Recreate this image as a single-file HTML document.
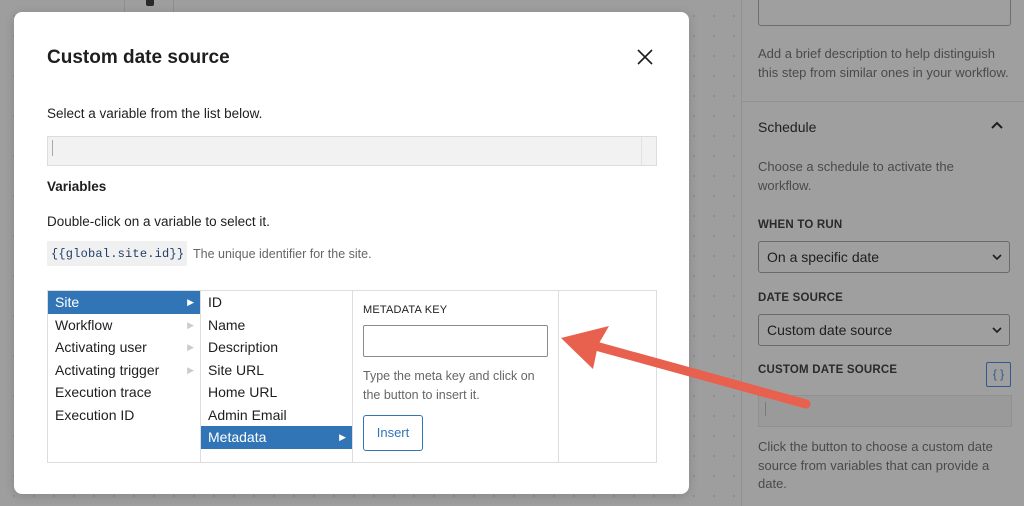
<!DOCTYPE html>
<html><head><meta charset="utf-8"><style>
*{box-sizing:border-box;margin:0;padding:0}
body{width:1024px;height:506px;overflow:hidden;position:relative;font-family:"Liberation Sans",sans-serif;background-color:#9e9e9e;background-image:radial-gradient(#8a8a8a 0.8px,transparent 1px);background-size:20px 20px;background-position:4px 6px}
.abs{position:absolute}
.side{left:741px;top:0;width:283px;height:506px;background:#9f9f9f;border-left:1px solid #929292;color:#3a3a3a}
.modal{left:14px;top:12px;width:675px;height:482px;background:#fff;border-radius:8px;box-shadow:0 2px 10px rgba(0,0,0,.15)}
.t{position:absolute;white-space:nowrap}
.lab{font-size:11.5px;font-weight:bold;color:#2a2a2a;letter-spacing:.2px}
.sel{position:absolute;left:16px;width:252px;height:32px;border:1px solid #6a6a6a;border-radius:3px;font-size:14px;padding:7px 8px;color:#1e1e1e}
.list div{height:22.5px;line-height:22.5px;font-size:14px;padding-left:7px;color:#1e1e1e;position:relative}
.hl{background:#3175b7;color:#fff!important}
.ar{position:absolute;right:6px;top:0;font-size:9px;color:#ccc}
.hl .ar{color:#fff}
</style></head><body>
<div class="abs" style="left:124px;top:0;width:50px;height:14px;border-left:1px solid #8e8e8e;border-right:1px solid #8e8e8e"></div>
<div class="abs" style="left:146px;top:0;width:8px;height:6px;background:#2a2a2a;border-radius:0 0 2px 2px"></div>
<div class="abs side">
 <div class="abs" style="left:16px;top:-4px;width:253px;height:30px;border:1px solid #6e6e6e;border-radius:3px"></div>
 <div class="t" style="left:16px;top:45px;font-size:13px;line-height:18.5px;color:#4a4a4a">Add a brief description to help distinguish<br>this step from similar ones in your workflow.</div>
 <div class="abs" style="left:0;top:101px;width:283px;border-top:1px solid #929292"></div>
 <div class="t" style="left:16px;top:119px;font-size:14px;font-weight:500;color:#1e1e1e">Schedule</div>
 <svg class="abs" style="left:249px;top:121px" width="12" height="8"><path d="M1 7L6 2L11 7" stroke="#1e1e1e" stroke-width="2" fill="none"/></svg>
 <div class="t" style="left:16px;top:157px;font-size:13px;line-height:19px;color:#4a4a4a">Choose a schedule to activate the<br>workflow.</div>
 <div class="t lab" style="left:16px;top:219px">WHEN TO RUN</div>
 <div class="sel" style="top:241px">On a specific date</div>
 <div class="t lab" style="left:16px;top:292px">DATE SOURCE</div>
 <div class="sel" style="top:314px">Custom date source</div>
 <svg class="abs" style="left:250px;top:254px" width="10" height="6"><path d="M1 1L5 5L9 1" stroke="#1e1e1e" stroke-width="1.6" fill="none"/></svg>
 <svg class="abs" style="left:250px;top:327px" width="10" height="6"><path d="M1 1L5 5L9 1" stroke="#1e1e1e" stroke-width="1.6" fill="none"/></svg>
 <div class="t lab" style="left:16px;top:364px">CUSTOM DATE SOURCE</div>
 <div class="abs" style="left:244px;top:362px;width:25px;height:25px;border:1px solid #2e5a8e;border-radius:2px;color:#2e5a8e;font-size:12px;text-align:center;line-height:22px">{ }</div>
 <div class="abs" style="left:16px;top:395px;width:254px;height:32px;border:1px solid #909090;background:#9a9a9a"></div>
 <div class="abs" style="left:23px;top:402px;width:1px;height:14px;background:#7a7a7a"></div>
 <div class="t" style="left:16px;top:438px;font-size:13px;line-height:18.5px;color:#4a4a4a">Click the button to choose a custom date<br>source from variables that can provide a<br>date.</div>
</div>
<div class="abs modal">
 <div class="t" style="left:33px;top:35px;font-size:19px;font-weight:bold;color:#1e1e1e">Custom date source</div>
 <svg class="abs" style="left:623px;top:37px" width="16" height="16"><path d="M1 1L15 15M15 1L1 15" stroke="#1e1e1e" stroke-width="1.6"/></svg>
 <div class="t" style="left:33px;top:94px;font-size:13.5px;color:#1e1e1e">Select a variable from the list below.</div>
 <div class="abs" style="left:33px;top:124px;width:610px;height:30px;border:1px solid #dcdcdc;background:#f2f2f2"></div>
 <div class="abs" style="left:627px;top:125px;width:1px;height:28px;background:#e2e2e2"></div>
 <div class="abs" style="left:38px;top:128px;width:1px;height:16px;background:#aaa"></div>
 <div class="t" style="left:33px;top:167px;font-size:13.5px;font-weight:bold;color:#1e1e1e">Variables</div>
 <div class="t" style="left:33px;top:202px;font-size:13.5px;color:#1e1e1e">Double-click on a variable to select it.</div>
 <div class="abs" style="left:33px;top:229px;width:140px;height:25px;background:#f0f0f0"></div>
 <div class="t" style="left:37px;top:235px;font-family:'Liberation Mono',monospace;font-size:12px;letter-spacing:0.2px;color:#1d3f6e">{{global.site.id}}</div>
 <div class="t" style="left:179px;top:235px;font-size:12.5px;color:#666">The unique identifier for the site.</div>
 <div class="abs" style="left:33px;top:278px;width:610px;height:173px;border:1px solid #ddd"></div>
 <div class="abs" style="left:186px;top:278px;width:1px;height:173px;background:#ddd"></div>
 <div class="abs" style="left:338px;top:278px;width:1px;height:173px;background:#ddd"></div>
 <div class="abs" style="left:544px;top:278px;width:1px;height:173px;background:#ddd"></div>
 <div class="abs list" style="left:34px;top:279px;width:152px">
  <div class="hl">Site<span class="ar">▶</span></div>
  <div>Workflow<span class="ar">▶</span></div>
  <div>Activating user<span class="ar">▶</span></div>
  <div>Activating trigger<span class="ar">▶</span></div>
  <div>Execution trace</div>
  <div>Execution ID</div>
 </div>
 <div class="abs list" style="left:187px;top:279px;width:151px">
  <div>ID</div><div>Name</div><div>Description</div><div>Site URL</div><div>Home URL</div><div>Admin Email</div>
  <div class="hl">Metadata<span class="ar">▶</span></div>
 </div>
 <div class="t lab" style="left:349px;top:292px;font-weight:normal;color:#1e1e1e;font-size:11px">METADATA KEY</div>
 <div class="abs" style="left:349px;top:313px;width:185px;height:32px;border:1px solid #8a8a8a;border-radius:2px"></div>
 <div class="t" style="left:349px;top:355px;font-size:12.5px;line-height:19px;color:#666">Type the meta key and click on<br>the button to insert it.</div>
 <div class="abs" style="left:349px;top:403px;width:60px;height:36px;border:1px solid #3175b7;border-radius:3px;color:#3175b7;font-size:13px;text-align:center;line-height:34px">Insert</div>
</div>
<svg class="abs" style="left:0;top:0" width="1024" height="506">
 <path d="M806 404L592 345" stroke="#e8604e" stroke-width="9" stroke-linecap="round" fill="none"/>
 <path d="M561 338L609 326L598 345L593 369Z" fill="#e8604e"/>
</svg>
</body></html>
